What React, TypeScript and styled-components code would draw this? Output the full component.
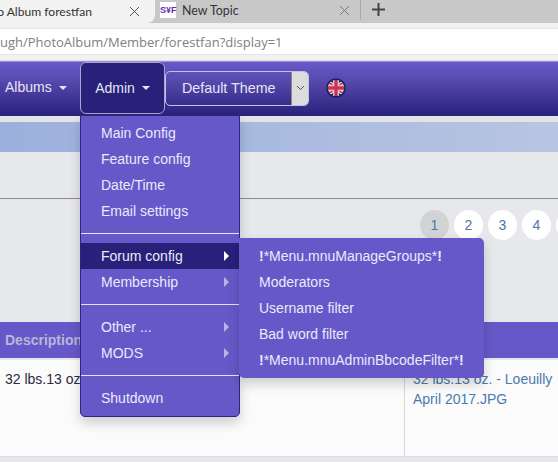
import React from "react";
import styled, { createGlobalStyle } from "styled-components";

const GlobalStyle = createGlobalStyle`
  html, body {
    margin: 0;
    padding: 0;
    background: #e7e8ec;
    overflow: hidden;
  }
  * { box-sizing: border-box; }
`;

const Page = styled.div`
  position: relative;
  width: 558px;
  height: 462px;
  overflow: hidden;
  font-family: "Liberation Sans", Arial, sans-serif;
  font-size: 14px;
`;

/* browser chrome */
const TabStrip = styled.div`
  display: flex;
  height: 23px;
  background: #c8c8c8;
  font-family: Lato, sans-serif;
  font-size: 12.4px;
  color: #333;
`;

const ActiveTab = styled.div`
  display: flex;
  align-items: center;
  justify-content: flex-end;
  width: 155px;
  padding-right: 15px;
  background: #f2f2f2;
  border-bottom-right-radius: 8px;
  white-space: nowrap;
  font-size: 12.1px;
`;

const CloseMark = styled.svg`
  flex: none;
  width: 11px;
  height: 11px;
  stroke: ${(p) => p.color || "#555"};
  stroke-width: 1;
  fill: none;
`;

const ActiveClose = styled(CloseMark)`
  margin-left: 37px;
`;

const OtherTab = styled.div`
  display: flex;
  align-items: center;
  width: 206px;
  padding-left: 5px;
  padding-right: 10px;
  border-right: 1px solid #aaa;
  margin: 0 0 3px;
`;

const Favicon = styled.div`
  width: 16px;
  height: 16px;
  margin-right: 6px;
  background: #fff;
  color: #6a2bb5;
  font: bold 9px/16px "Liberation Sans", sans-serif;
  text-align: center;
`;

const TabTitle = styled.span`
  flex: 1;
`;

const NewTab = styled.svg`
  width: 13px;
  height: 13px;
  margin: 3px 0 0 11px;
  stroke: #444;
  stroke-width: 2;
`;

const UrlRow = styled.div`
  height: 38px;
  padding: 5px 0 6px;
  background: #f2f2f2;
  border-bottom: 1px solid #ddd;
`;

const UrlBox = styled.div`
  height: 27px;
  background: #fff;
  border-top: 1px solid #e6e6e6;
  border-bottom: 1px solid #e6e6e6;
  display: flex;
  align-items: center;
  font-family: "Open Sans", sans-serif;
  font-size: 13px;
  color: #808080;
  white-space: nowrap;
`;

/* navbar */
const NavBar = styled.nav`
  display: flex;
  align-items: center;
  height: 55px;
  padding-bottom: 2px;
  background: linear-gradient(to bottom, #6859ca 0%, #5749ad 35%, #27227a 100%);
  border-top: 1px solid #9c93cf;
  color: #e8e4f8;
`;

const Caret = styled.span`
  display: inline-block;
  margin-left: 7px;
  vertical-align: middle;
  border-top: 4px solid #e8e4f8;
  border-left: 4px solid transparent;
  border-right: 4px solid transparent;
`;

const NavLink = styled.div`
  width: 80px;
  padding: 0 0 2px 5px;
`;

const AdminButton = styled.div`
  display: flex;
  align-items: center;
  justify-content: center;
  width: 85px;
  height: 52px;
  background: #27217a;
  border: 1px solid #a9a3d6;
  border-radius: 6px;
`;

const ThemeSelect = styled.div`
  display: flex;
  width: 144px;
  height: 35px;
  border: 1px solid #c5c1e4;
  border-radius: 5px;
  overflow: hidden;
`;

const ThemeLabel = styled.div`
  flex: 1;
  padding-left: 16px;
  font-size: 14.3px;
  line-height: 33px;
`;

const ThemeArrow = styled.div`
  display: flex;
  align-items: center;
  justify-content: center;
  width: 17px;
  background: #dcdcdc;
  border-left: 1px solid #888;
`;

const Flag = styled.svg`
  width: 20px;
  height: 20px;
  margin-left: 17px;
`;

/* page body */
const Spacer = styled.div`
  height: 6px;
  background: #e4e4e6;
`;

const InfoBand = styled.div`
  height: 30px;
  background: linear-gradient(to right, #9cb0dd, #b8c5e2);
`;

const TitleArea = styled.div`
  height: 47px;
  border-bottom: 1px solid #8c8c8f;
`;

const PagerArea = styled.div`
  display: flex;
  justify-content: flex-end;
  gap: 5px;
  height: 123px;
  padding: 11px 0 0;
  margin-right: -27px;
`;

const PageDot = styled.div<{ $current?: boolean }>`
  width: 29px;
  height: 30px;
  border-radius: 50%;
  background: ${(p) => (p.$current ? "#d2d3d5" : "#ffffff")};
  color: #4d74a3;
  text-align: center;
  line-height: 31px;
`;

const TableHead = styled.div`
  height: 36px;
  padding-left: 5px;
  background: #6658c8;
  color: #b9b6d8;
  font-weight: bold;
  line-height: 36px;
`;

const TableRow = styled.div`
  display: grid;
  grid-template-columns: 405px 1fr;
  height: 97px;
  margin-top: 2px;
  background: #fbfbfc;
  border-bottom: 1px solid #dcdcdf;
  line-height: 20px;
`;

const DescCell = styled.div`
  padding: 9px 0 0 5px;
  color: #2b2b3a;
  border-right: 1px solid #d8d8db;
`;

const FileCell = styled.div`
  padding: 9px 0 0 8px;
  color: #4a7aae;
`;

/* menus */
const Menu = styled.div`
  position: absolute;
  padding: 5px 0;
  background: #6658c8;
  color: #ece9fa;
  border-radius: 0 0 5px 5px;
  box-shadow: 0 6px 12px rgba(0, 0, 0, 0.18);
`;

const AdminMenu = styled(Menu)`
  left: 80px;
  top: 115px;
  width: 160px;
  height: 302px;
  padding-top: 4px;
  border: 1px solid #2c2680;
`;

const SubMenu = styled(Menu)`
  left: 239px;
  top: 238px;
  width: 245px;
  height: 140px;
  border-radius: 0 5px 5px 5px;
`;

const MenuItem = styled.div<{ $active?: boolean }>`
  position: relative;
  height: 26px;
  padding-left: 20px;
  line-height: 26px;
  background: ${(p) => (p.$active ? "#27217a" : "transparent")};
`;

const SubItem = styled.div`
  height: 26px;
  padding-left: 20px;
  line-height: 26px;
`;

const Bang = styled.b`
  font-weight: bold;
`;

const Arrow = styled.span<{ $bright?: boolean }>`
  position: absolute;
  right: 10px;
  top: 8px;
  border-left: 5px solid ${(p) => (p.$bright ? "#ffffff" : "#b9b3e4")};
  border-top: 5px solid transparent;
  border-bottom: 5px solid transparent;
`;

const MenuDivider = styled.div`
  height: 1px;
  margin: 9px 0;
  background: #e8e4f8;
`;

const topItems = ["Main Config", "Feature config", "Date/Time", "Email settings"];

const Cross = () => (
  <>
    <path d="M1 1 L10 10" />
    <path d="M10 1 L1 10" />
  </>
);

export default function App() {
  return (
    <Page>
      <GlobalStyle />
      <TabStrip>
        <ActiveTab>
          o Album forestfan
          <ActiveClose viewBox="0 0 11 11">
            <Cross />
          </ActiveClose>
        </ActiveTab>
        <OtherTab>
          <Favicon>S¥F</Favicon>
          <TabTitle>New Topic</TabTitle>
          <CloseMark viewBox="0 0 11 11" color="#777">
            <Cross />
          </CloseMark>
        </OtherTab>
        <NewTab viewBox="0 0 13 13">
          <path d="M6.5 0 V13 M0 6.5 H13" />
        </NewTab>
      </TabStrip>
      <UrlRow>
        <UrlBox>ugh/PhotoAlbum/Member/forestfan?display=1</UrlBox>
      </UrlRow>
      <NavBar>
        <NavLink>
          Albums
          <Caret />
        </NavLink>
        <AdminButton>
          Admin
          <Caret />
        </AdminButton>
        <ThemeSelect>
          <ThemeLabel>Default Theme</ThemeLabel>
          <ThemeArrow>
            <svg width="9" height="6" viewBox="0 0 9 6" fill="none" stroke="#555">
              <path d="M1 1 L4.5 4.5 L8 1" />
            </svg>
          </ThemeArrow>
        </ThemeSelect>
        <Flag viewBox="0 0 21 21">
          <defs>
            <clipPath id="flagClip">
              <circle cx="10.5" cy="10.5" r="9" />
            </clipPath>
          </defs>
          <g clipPath="url(#flagClip)">
            <rect width="21" height="21" fill="#2b2a78" />
            <path d="M0 2 L21 19 M21 2 L0 19" stroke="#e8d8e4" strokeWidth="4" />
            <path d="M0 2 L21 19 M21 2 L0 19" stroke="#c8324c" strokeWidth="1.5" />
            <path d="M10.5 0 V21 M0 10.5 H21" stroke="#e8d8e4" strokeWidth="6" />
            <path d="M10.5 0 V21 M0 10.5 H21" stroke="#c8324c" strokeWidth="3.5" />
          </g>
          <circle cx="10.5" cy="10.5" r="9.5" fill="none" stroke="#1d1a5c" strokeWidth="1.5" />
        </Flag>
      </NavBar>
      <Spacer />
      <InfoBand />
      <TitleArea />
      <PagerArea>
        <PageDot $current>1</PageDot>
        <PageDot>2</PageDot>
        <PageDot>3</PageDot>
        <PageDot>4</PageDot>
        <PageDot />
      </PagerArea>
      <TableHead>Description</TableHead>
      <TableRow>
        <DescCell>32 lbs.13 oz. - Loeuilly April 2017</DescCell>
        <FileCell>
          32 lbs.13 oz. - Loeuilly
          <br />
          April 2017.JPG
        </FileCell>
      </TableRow>

      <AdminMenu>
        {topItems.map((item) => (
          <MenuItem key={item}>{item}</MenuItem>
        ))}
        <MenuDivider />
        <MenuItem $active>
          Forum config
          <Arrow $bright />
        </MenuItem>
        <MenuItem>
          Membership
          <Arrow />
        </MenuItem>
        <MenuDivider />
        <MenuItem>
          Other ...
          <Arrow />
        </MenuItem>
        <MenuItem>
          MODS
          <Arrow />
        </MenuItem>
        <MenuDivider />
        <MenuItem>Shutdown</MenuItem>
      </AdminMenu>
      <SubMenu>
        <SubItem>
          <Bang>!</Bang>*Menu.mnuManageGroups*<Bang>!</Bang>
        </SubItem>
        <SubItem>Moderators</SubItem>
        <SubItem>Username filter</SubItem>
        <SubItem>Bad word filter</SubItem>
        <SubItem>
          <Bang>!</Bang>*Menu.mnuAdminBbcodeFilter*<Bang>!</Bang>
        </SubItem>
      </SubMenu>
    </Page>
  );
}
